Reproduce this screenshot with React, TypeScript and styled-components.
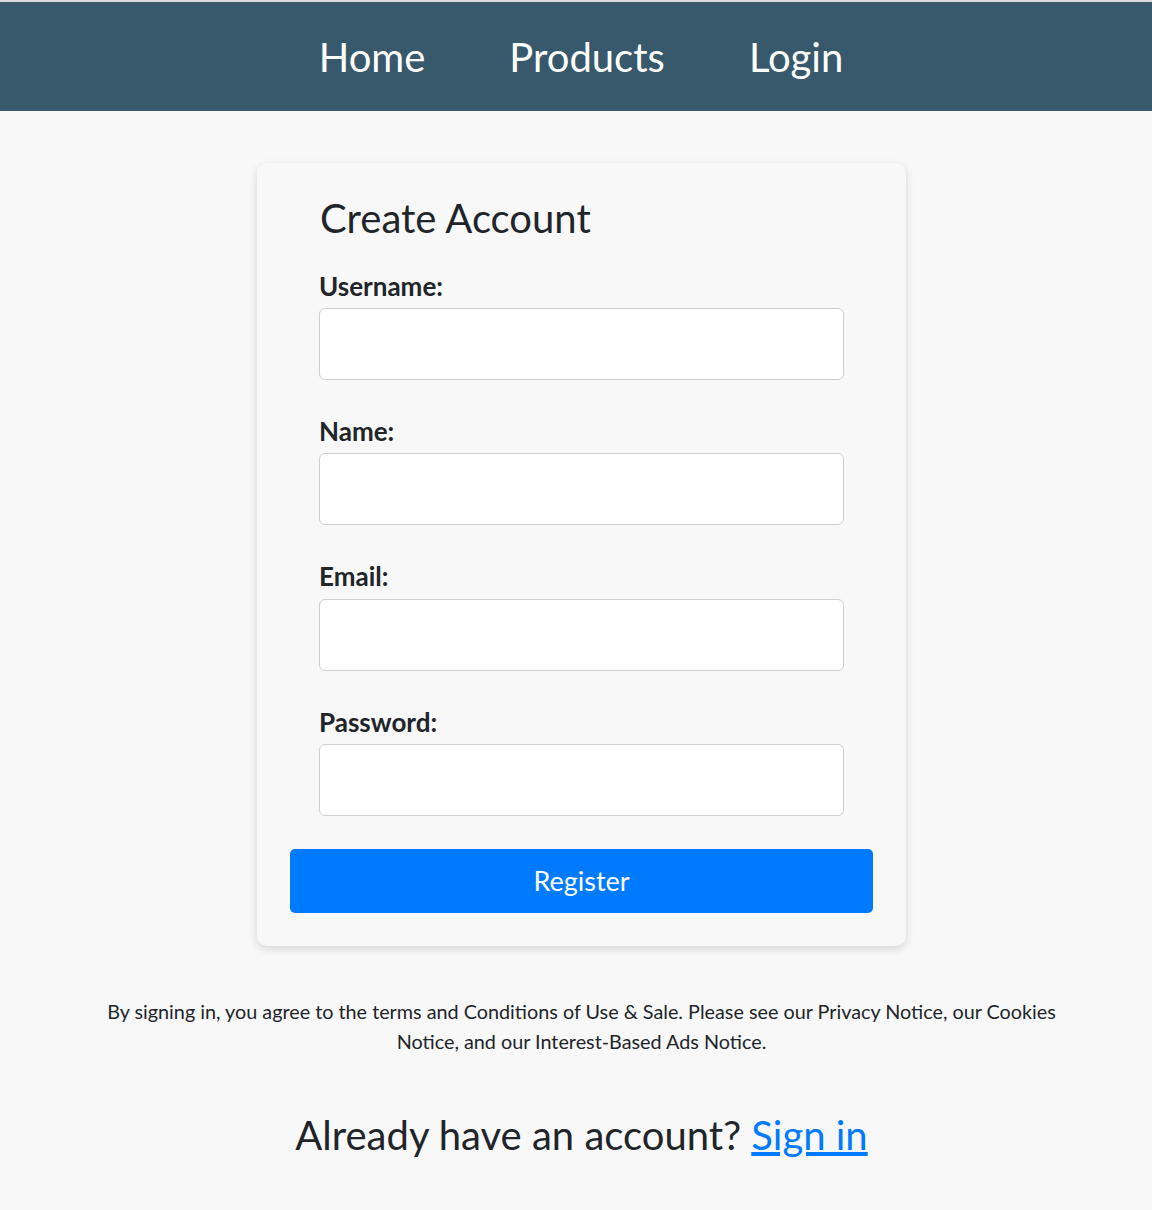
import styled, { createGlobalStyle } from 'styled-components';

const GlobalStyle = createGlobalStyle`
  body {
    margin: 0;
    background: #f8f8f8;
    font-family: Lato, "Noto Sans", sans-serif;
    color: #212529;
  }
`;

const NavBar = styled.nav`
  border-top: 2px solid #d9dde0;
  background: #37596b;
  height: 109px;
  display: flex;
  align-items: center;
  justify-content: center;
  gap: 84px;
  padding-left: 10px;
`;

const NavLink = styled.a`
  color: #fff;
  font-size: 40px;
  text-decoration: none;
  cursor: pointer;
`;

const Main = styled.main`
  display: flex;
  flex-direction: column;
  align-items: center;
  padding: 52px 0 40px 11px;
`;

const Card = styled.form`
  width: 649px;
  box-sizing: border-box;
  padding: 31px 33px 33px;
  border-radius: 10px;
  background: #f8f8f8;
  box-shadow: 0 3px 8px rgba(0, 0, 0, 0.14);
  display: flex;
  flex-direction: column;
`;

const Title = styled.h2`
  margin: 0 30px 29px;
  font-size: 40px;
  font-weight: 400;
  line-height: 1.2;
`;

const Field = styled.div`
  display: flex;
  flex-direction: column;
  margin: 0 29px 36px;

  &:last-of-type {
    margin-bottom: 24px;
  }
`;

const Label = styled.label`
  font-size: 26px;
  font-weight: 700;
  line-height: 1.2;
  margin-bottom: 6px;
`;

const Input = styled.input`
  height: 72px;
  box-sizing: border-box;
  border: 1px solid #cfcfcf;
  border-radius: 6px;
  background: #fff;
  font-size: 20px;
  padding: 0 12px;
`;

const Button = styled.button`
  margin-top: 9px;
  height: 64px;
  border: none;
  border-radius: 5px;
  background: #007bff;
  color: #fff;
  font-family: inherit;
  font-size: 27px;
  cursor: pointer;
`;

const Terms = styled.p`
  max-width: 960px;
  margin: 50px 0 0;
  text-align: center;
  font-size: 19.8px;
  line-height: 30px;
`;

const SignInLine = styled.p`
  margin: 55px 0 0;
  font-size: 40px;
  line-height: 1.2;
`;

const SignInLink = styled.a`
  color: #007bff;
  text-decoration: underline;
  cursor: pointer;
`;

const fields = ['Username', 'Name', 'Email', 'Password'];

const App = () => {
  return (
    <>
      <GlobalStyle />
      <NavBar>
        <NavLink>Home</NavLink>
        <NavLink>Products</NavLink>
        <NavLink>Login</NavLink>
      </NavBar>
      <Main>
        <Card onSubmit={(e) => e.preventDefault()}>
          <Title>Create Account</Title>
          {fields.map((f) => (
            <Field key={f}>
              <Label htmlFor={f.toLowerCase()}>{f}:</Label>
              <Input
                id={f.toLowerCase()}
                type={f === 'Password' ? 'password' : f === 'Email' ? 'email' : 'text'}
              />
            </Field>
          ))}
          <Button type="submit">Register</Button>
        </Card>
        <Terms>
          By signing in, you agree to the terms and Conditions of Use &amp; Sale. Please see our
          Privacy Notice, our Cookies Notice, and our Interest-Based Ads Notice.
        </Terms>
        <SignInLine>
          Already have an account? <SignInLink>Sign in</SignInLink>
        </SignInLine>
      </Main>
    </>
  );
};

export default App;
